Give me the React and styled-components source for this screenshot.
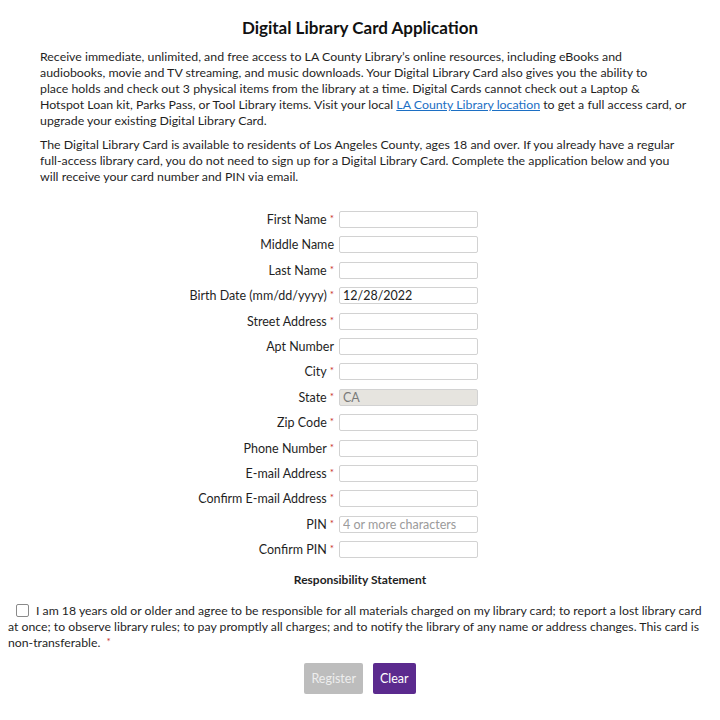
import React from 'react'
import styled, { createGlobalStyle } from 'styled-components'

const GlobalStyle = createGlobalStyle`
  body {
    margin: 0;
    background: #ffffff;
    font-family: Lato, 'Open Sans', sans-serif;
    color: #1f1f1f;
  }
`

const Page = styled.div`
  width: 720px;
  padding-top: 18px;
`

const Title = styled.h1`
  margin: 0 0 11px;
  font-size: 17px;
  font-weight: 700;
  text-align: center;
  color: #111;
  line-height: 20px;
`

const Intro = styled.div`
  padding: 0 40px;
`

const Para = styled.p`
  margin: 0 0 8px;
  font-size: 12.35px;
  line-height: 16px;
  white-space: nowrap;
`

const Link = styled.a`
  color: #1c6fc4;
  text-decoration: underline;
`

const Form = styled.div`
  margin-top: 26px;
  display: flex;
  flex-direction: column;
  gap: 8.4px;
`

const Row = styled.div`
  display: flex;
  align-items: center;
  height: 17px;
`

const Label = styled.label`
  flex: 0 0 339px;
  text-align: right;
  font-size: 12.5px;
  padding-right: 5px;
  box-sizing: border-box;
  white-space: nowrap;
`

const Star = styled.span`
  color: #c8302c;
  font-size: 10px;
  line-height: 0;
  margin-left: 3px;
  vertical-align: 2px;
`

const Input = styled.input`
  width: 139px;
  height: 17px;
  box-sizing: border-box;
  border: 1px solid #d2d2d2;
  border-radius: 2px;
  padding: 0 3px;
  font-family: Lato, sans-serif;
  font-size: 12.5px;
  color: #222;
  background: ${p => (p.disabled ? '#e6e4df' : '#fff')};
  &:disabled {
    color: #7a7a7a;
  }
  &::placeholder {
    color: #9b9b9b;
  }
`

const SubTitle = styled.div`
  margin-top: 14px;
  text-align: center;
  font-size: 12px;
  font-weight: 700;
  line-height: 16px;
`

const Agreement = styled.p`
  margin: 15px 0 0;
  padding: 0 8px;
  font-size: 12.25px;
  line-height: 16px;
  white-space: nowrap;
`

const Box = styled.span`
  display: inline-block;
  width: 11px;
  height: 11px;
  border: 1px solid #8a8a8a;
  border-radius: 2px;
  margin: 0 7px 0 8px;
  vertical-align: -2px;
`

const Buttons = styled.div`
  display: flex;
  justify-content: center;
  gap: 10px;
  margin-top: 12px;
`

const Button = styled.button`
  height: 31px;
  padding: 0 7px;
  border: none;
  border-radius: 2px;
  font-family: Lato, sans-serif;
  font-size: 12.5px;
  color: ${p => (p.primary ? '#ffffff' : '#eeeeee')};
  background: ${p => (p.primary ? '#5b2a8e' : '#bdbdbd')};
`

const fields = [
  { label: 'First Name', req: true },
  { label: 'Middle Name' },
  { label: 'Last Name', req: true },
  { label: 'Birth Date (mm/dd/yyyy)', req: true, value: '12/28/2022' },
  { label: 'Street Address', req: true },
  { label: 'Apt Number' },
  { label: 'City', req: true },
  { label: 'State', req: true, value: 'CA', disabled: true },
  { label: 'Zip Code', req: true },
  { label: 'Phone Number', req: true },
  { label: 'E-mail Address', req: true },
  { label: 'Confirm E-mail Address', req: true },
  { label: 'PIN', req: true, placeholder: '4 or more characters' },
  { label: 'Confirm PIN', req: true },
]

export default function App() {
  return (
    <Page>
      <GlobalStyle />
      <Title>Digital Library Card Application</Title>
      <Intro>
        <Para>
          Receive immediate, unlimited, and free access to LA County Library’s online resources, including eBooks and<br />
          audiobooks, movie and TV streaming, and music downloads. Your Digital Library Card also gives you the ability to<br />
          place holds and check out 3 physical items from the library at a time. Digital Cards cannot check out a Laptop &amp;<br />
          Hotspot Loan kit, Parks Pass, or Tool Library items. Visit your local <Link href="#">LA County Library location</Link> to get a full access card, or<br />
          upgrade your existing Digital Library Card.
        </Para>
        <Para>
          The Digital Library Card is available to residents of Los Angeles County, ages 18 and over. If you already have a regular<br />
          full-access library card, you do not need to sign up for a Digital Library Card. Complete the application below and you<br />
          will receive your card number and PIN via email.
        </Para>
      </Intro>
      <Form>
        {fields.map(f => (
          <Row key={f.label}>
            <Label>
              {f.label}
              {f.req && <Star>*</Star>}
            </Label>
            <Input
              defaultValue={f.value}
              disabled={f.disabled}
              placeholder={f.placeholder}
            />
          </Row>
        ))}
      </Form>
      <SubTitle>Responsibility Statement</SubTitle>
      <Agreement>
        <Box />
        I am 18 years old or older and agree to be responsible for all materials charged on my library card; to report a lost library card<br />
        at once; to observe library rules; to pay promptly all charges; and to notify the library of any name or address changes. This card is<br />
        non-transferable. <Star>*</Star>
      </Agreement>
      <Buttons>
        <Button>Register</Button>
        <Button primary>Clear</Button>
      </Buttons>
    </Page>
  )
}
